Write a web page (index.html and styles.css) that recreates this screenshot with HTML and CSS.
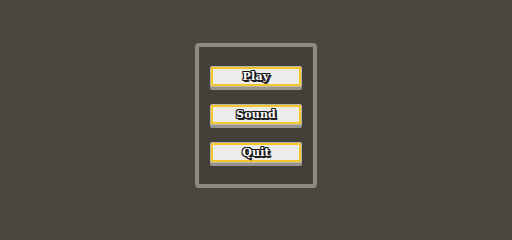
FILE: index.html
```html
<!DOCTYPE html>
<html>
<head>
<meta charset="utf-8">
<link rel="stylesheet" href="styles.css">
</head>
<body>
<div class="stage">
  <div class="panel">
    <button class="btn">Play</button>
    <button class="btn">Sound</button>
    <button class="btn">Quit</button>
  </div>
</div>
</body>
</html>
```
FILE: styles.css
```css
html, body {
  margin: 0;
  padding: 0;
  background: #4a453e;
}
.stage {
  width: 512px;
  height: 230px;
  display: flex;
  align-items: center;
  justify-content: center;
}
.panel {
  box-sizing: border-box;
  width: 122px;
  height: 145px;
  border: 4px solid #8b8a83;
  border-radius: 4px;
  background: #433f39;
  display: flex;
  flex-direction: column;
  align-items: center;
  padding-top: 20px;
  gap: 19px;
}
.btn {
  box-sizing: border-box;
  width: 90px;
  height: 19px;
  margin: 0;
  padding: 0;
  border: 2px solid #f4c62a;
  border-radius: 1px;
  background: #ececea;
  box-shadow: 0 0 0 1px #b9b7ae, 0 3px 0 1px #97958e;
  font-family: "DejaVu Serif", serif;
  font-weight: bold;
  font-size: 11px;
  line-height: 15px;
  letter-spacing: 0.2px;
  color: #ffffff;
  text-align: center;
  text-shadow:
    -1px 0 #1a1a1a, 1px 0 #1a1a1a, 0 -1px #1a1a1a, 0 1px #1a1a1a,
    -1px -1px #1a1a1a, 1px -1px #1a1a1a, -1px 1px #1a1a1a, 1px 1px #1a1a1a,
    2px 1px #1a1a1a, 1px 2px #1a1a1a, 2px 2px #555;
}
```
